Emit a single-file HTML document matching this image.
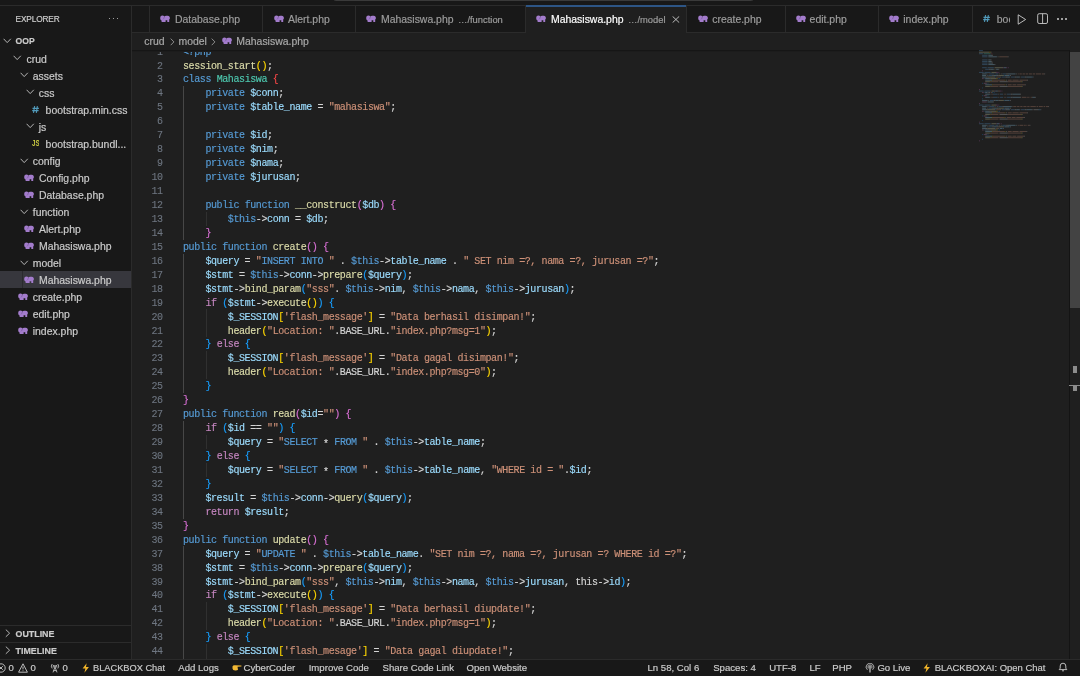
<!DOCTYPE html><html><head><meta charset="utf-8"><style>

html,body{margin:0;padding:0;}
body{width:1080px;height:676px;overflow:hidden;background:#181818;position:relative;font-family:"Liberation Sans", sans-serif;}
.abs{position:absolute;}
.t{position:absolute;white-space:pre;line-height:17px;-webkit-text-stroke:0.18px currentColor;}
.sb{font-size:10.45px;color:#cccccc;}
.tab{font-size:10.45px;color:#9d9d9d;}
.st{font-size:9.6px;color:#cccccc;}
.code{position:absolute;left:0;white-space:pre;font-family:"Liberation Mono", monospace;font-size:10px;letter-spacing:-0.4px;line-height:14px;height:14px;-webkit-text-stroke:0.15px currentColor;}
.ln{position:absolute;text-align:right;width:40px;font-family:"Liberation Mono", monospace;font-size:10px;letter-spacing:-0.4px;line-height:14px;color:#6e7681;-webkit-text-stroke:0.1px currentColor;}

</style></head><body><div id="root" style="position:absolute;left:0;top:0;width:1080px;height:676px;will-change:transform">
<div class="abs" style="left:0;top:0;width:1080px;height:5px;background:#181818"></div>
<div class="abs" style="left:333px;top:-6px;width:421px;height:7.1px;background:#3a3a3a;border-radius:4px"></div>
<div class="abs" style="left:0;top:5px;width:1080px;height:1px;background:#2b2b2b"></div>
<div class="abs" style="left:0;top:6px;width:131px;height:653px;background:#181818"></div>
<div class="abs" style="left:131px;top:6px;width:1px;height:653px;background:#2b2b2b"></div>
<div class="t" style="left:15.6px;top:11px;font-size:8.3px;letter-spacing:-0.15px;color:#cccccc">EXPLORER</div>
<div class="abs" style="left:108.6px;top:18px;width:1.4px;height:1.4px;background:#cccccc;border-radius:1px"></div>
<div class="abs" style="left:112.6px;top:18px;width:1.4px;height:1.4px;background:#cccccc;border-radius:1px"></div>
<div class="abs" style="left:116.6px;top:18px;width:1.4px;height:1.4px;background:#cccccc;border-radius:1px"></div>
<svg style="position:absolute;left:3.3px;top:38.2px" width="9" height="6" viewBox="0 0 9 6"><path d="M0.6 0.8 L4.2 4.6 L7.8 0.8" fill="none" stroke="#c5c5c5" stroke-width="0.9"/></svg>
<div class="t" style="left:15.6px;top:33.0px;font-size:8.6px;font-weight:700;color:#cccccc">OOP</div>
<svg style="position:absolute;left:13.3px;top:55.25000000000001px" width="9" height="6" viewBox="0 0 9 6"><path d="M0.6 0.8 L4.2 4.6 L7.8 0.8" fill="none" stroke="#c5c5c5" stroke-width="0.9"/></svg>
<div class="t sb" style="left:26.6px;top:50.550000000000004px">crud</div>
<svg style="position:absolute;left:19.6px;top:72.3px" width="9" height="6" viewBox="0 0 9 6"><path d="M0.6 0.8 L4.2 4.6 L7.8 0.8" fill="none" stroke="#c5c5c5" stroke-width="0.9"/></svg>
<div class="t sb" style="left:32.75px;top:67.60000000000001px">assets</div>
<svg style="position:absolute;left:25.8px;top:89.35px" width="9" height="6" viewBox="0 0 9 6"><path d="M0.6 0.8 L4.2 4.6 L7.8 0.8" fill="none" stroke="#c5c5c5" stroke-width="0.9"/></svg>
<div class="t sb" style="left:38.75px;top:84.65px">css</div>
<svg style="position:absolute;left:31.9px;top:105.70000000000002px" width="7.2" height="7" viewBox="0 0 7.2 7"><path d="M2.6 0.2 L1.5 6.8 M5.4 0.2 L4.3 6.8 M0.5 2.3 H6.9 M0.2 4.7 H6.6" stroke="#519aba" stroke-width="1.15"/></svg>
<div class="t sb" style="left:45.6px;top:101.70000000000002px">bootstrap.min.css</div>
<svg style="position:absolute;left:25.8px;top:123.44999999999999px" width="9" height="6" viewBox="0 0 9 6"><path d="M0.6 0.8 L4.2 4.6 L7.8 0.8" fill="none" stroke="#c5c5c5" stroke-width="0.9"/></svg>
<div class="t sb" style="left:38.75px;top:118.75px">js</div>
<svg style="position:absolute;left:31.9px;top:139.9px" width="7.6" height="6.5" viewBox="0 0 7.6 6.5"><text x="0" y="6.2" font-family="Liberation Sans" font-weight="700" font-size="8.4" fill="#cbcb41" textLength="7.6" lengthAdjust="spacingAndGlyphs">JS</text></svg>
<div class="t sb" style="left:45.6px;top:135.8px">bootstrap.bundl...</div>
<svg style="position:absolute;left:19.6px;top:157.55px" width="9" height="6" viewBox="0 0 9 6"><path d="M0.6 0.8 L4.2 4.6 L7.8 0.8" fill="none" stroke="#c5c5c5" stroke-width="0.9"/></svg>
<div class="t sb" style="left:32.75px;top:152.85000000000002px">config</div>
<svg style="position:absolute;left:24.4px;top:174.0px" width="10" height="7.1" viewBox="0 0 10 7.1"><path fill="#a37ccc" d="M0.2 3.0 C0.2 1.2 1.2 0.4 2.4 0.4 C3.3 0.4 3.8 0.7 4.2 1.2 L4.5 1.5 C4.8 1.0 5.3 0.7 6.2 0.7 L7.8 0.7 C9.2 0.7 9.9 1.8 9.9 3.0 C9.9 3.8 9.6 4.3 9.2 4.6 L9.2 7.1 L7.3 7.1 L7.3 5.3 L5.6 5.3 L5.6 7.1 L1.6 7.1 L1.6 5.6 C0.8 5.2 0.2 4.4 0.2 3.0 Z"/><path d="M4.5 1.5 C4.2 2.5 4.1 3.4 3.1 4.3" fill="none" stroke="#4a3366" stroke-width="0.6" opacity="0.6"/></svg>
<div class="t sb" style="left:39.0px;top:169.9px">Config.php</div>
<svg style="position:absolute;left:24.4px;top:191.05px" width="10" height="7.1" viewBox="0 0 10 7.1"><path fill="#a37ccc" d="M0.2 3.0 C0.2 1.2 1.2 0.4 2.4 0.4 C3.3 0.4 3.8 0.7 4.2 1.2 L4.5 1.5 C4.8 1.0 5.3 0.7 6.2 0.7 L7.8 0.7 C9.2 0.7 9.9 1.8 9.9 3.0 C9.9 3.8 9.6 4.3 9.2 4.6 L9.2 7.1 L7.3 7.1 L7.3 5.3 L5.6 5.3 L5.6 7.1 L1.6 7.1 L1.6 5.6 C0.8 5.2 0.2 4.4 0.2 3.0 Z"/><path d="M4.5 1.5 C4.2 2.5 4.1 3.4 3.1 4.3" fill="none" stroke="#4a3366" stroke-width="0.6" opacity="0.6"/></svg>
<div class="t sb" style="left:39.0px;top:186.95000000000002px">Database.php</div>
<svg style="position:absolute;left:19.6px;top:208.7px" width="9" height="6" viewBox="0 0 9 6"><path d="M0.6 0.8 L4.2 4.6 L7.8 0.8" fill="none" stroke="#c5c5c5" stroke-width="0.9"/></svg>
<div class="t sb" style="left:32.75px;top:204.0px">function</div>
<svg style="position:absolute;left:24.4px;top:225.15px" width="10" height="7.1" viewBox="0 0 10 7.1"><path fill="#a37ccc" d="M0.2 3.0 C0.2 1.2 1.2 0.4 2.4 0.4 C3.3 0.4 3.8 0.7 4.2 1.2 L4.5 1.5 C4.8 1.0 5.3 0.7 6.2 0.7 L7.8 0.7 C9.2 0.7 9.9 1.8 9.9 3.0 C9.9 3.8 9.6 4.3 9.2 4.6 L9.2 7.1 L7.3 7.1 L7.3 5.3 L5.6 5.3 L5.6 7.1 L1.6 7.1 L1.6 5.6 C0.8 5.2 0.2 4.4 0.2 3.0 Z"/><path d="M4.5 1.5 C4.2 2.5 4.1 3.4 3.1 4.3" fill="none" stroke="#4a3366" stroke-width="0.6" opacity="0.6"/></svg>
<div class="t sb" style="left:39.0px;top:221.05px">Alert.php</div>
<svg style="position:absolute;left:24.4px;top:242.20000000000002px" width="10" height="7.1" viewBox="0 0 10 7.1"><path fill="#a37ccc" d="M0.2 3.0 C0.2 1.2 1.2 0.4 2.4 0.4 C3.3 0.4 3.8 0.7 4.2 1.2 L4.5 1.5 C4.8 1.0 5.3 0.7 6.2 0.7 L7.8 0.7 C9.2 0.7 9.9 1.8 9.9 3.0 C9.9 3.8 9.6 4.3 9.2 4.6 L9.2 7.1 L7.3 7.1 L7.3 5.3 L5.6 5.3 L5.6 7.1 L1.6 7.1 L1.6 5.6 C0.8 5.2 0.2 4.4 0.2 3.0 Z"/><path d="M4.5 1.5 C4.2 2.5 4.1 3.4 3.1 4.3" fill="none" stroke="#4a3366" stroke-width="0.6" opacity="0.6"/></svg>
<div class="t sb" style="left:39.0px;top:238.10000000000002px">Mahasiswa.php</div>
<svg style="position:absolute;left:19.6px;top:259.85px" width="9" height="6" viewBox="0 0 9 6"><path d="M0.6 0.8 L4.2 4.6 L7.8 0.8" fill="none" stroke="#c5c5c5" stroke-width="0.9"/></svg>
<div class="t sb" style="left:32.75px;top:255.15px">model</div>
<div class="abs" style="left:0;top:271.3px;width:131px;height:17px;background:#37373d"></div>
<div class="abs" style="left:21.5px;top:271.3px;width:1px;height:17px;background:#2a2a2e"></div>
<svg style="position:absolute;left:24.4px;top:276.3px" width="10" height="7.1" viewBox="0 0 10 7.1"><path fill="#a37ccc" d="M0.2 3.0 C0.2 1.2 1.2 0.4 2.4 0.4 C3.3 0.4 3.8 0.7 4.2 1.2 L4.5 1.5 C4.8 1.0 5.3 0.7 6.2 0.7 L7.8 0.7 C9.2 0.7 9.9 1.8 9.9 3.0 C9.9 3.8 9.6 4.3 9.2 4.6 L9.2 7.1 L7.3 7.1 L7.3 5.3 L5.6 5.3 L5.6 7.1 L1.6 7.1 L1.6 5.6 C0.8 5.2 0.2 4.4 0.2 3.0 Z"/><path d="M4.5 1.5 C4.2 2.5 4.1 3.4 3.1 4.3" fill="none" stroke="#4a3366" stroke-width="0.6" opacity="0.6"/></svg>
<div class="t sb" style="left:39.0px;top:272.2px">Mahasiswa.php</div>
<svg style="position:absolute;left:18.1px;top:293.35px" width="10" height="7.1" viewBox="0 0 10 7.1"><path fill="#a37ccc" d="M0.2 3.0 C0.2 1.2 1.2 0.4 2.4 0.4 C3.3 0.4 3.8 0.7 4.2 1.2 L4.5 1.5 C4.8 1.0 5.3 0.7 6.2 0.7 L7.8 0.7 C9.2 0.7 9.9 1.8 9.9 3.0 C9.9 3.8 9.6 4.3 9.2 4.6 L9.2 7.1 L7.3 7.1 L7.3 5.3 L5.6 5.3 L5.6 7.1 L1.6 7.1 L1.6 5.6 C0.8 5.2 0.2 4.4 0.2 3.0 Z"/><path d="M4.5 1.5 C4.2 2.5 4.1 3.4 3.1 4.3" fill="none" stroke="#4a3366" stroke-width="0.6" opacity="0.6"/></svg>
<div class="t sb" style="left:32.75px;top:289.25px">create.php</div>
<svg style="position:absolute;left:18.1px;top:310.40000000000003px" width="10" height="7.1" viewBox="0 0 10 7.1"><path fill="#a37ccc" d="M0.2 3.0 C0.2 1.2 1.2 0.4 2.4 0.4 C3.3 0.4 3.8 0.7 4.2 1.2 L4.5 1.5 C4.8 1.0 5.3 0.7 6.2 0.7 L7.8 0.7 C9.2 0.7 9.9 1.8 9.9 3.0 C9.9 3.8 9.6 4.3 9.2 4.6 L9.2 7.1 L7.3 7.1 L7.3 5.3 L5.6 5.3 L5.6 7.1 L1.6 7.1 L1.6 5.6 C0.8 5.2 0.2 4.4 0.2 3.0 Z"/><path d="M4.5 1.5 C4.2 2.5 4.1 3.4 3.1 4.3" fill="none" stroke="#4a3366" stroke-width="0.6" opacity="0.6"/></svg>
<div class="t sb" style="left:32.75px;top:306.3px">edit.php</div>
<svg style="position:absolute;left:18.1px;top:327.45000000000005px" width="10" height="7.1" viewBox="0 0 10 7.1"><path fill="#a37ccc" d="M0.2 3.0 C0.2 1.2 1.2 0.4 2.4 0.4 C3.3 0.4 3.8 0.7 4.2 1.2 L4.5 1.5 C4.8 1.0 5.3 0.7 6.2 0.7 L7.8 0.7 C9.2 0.7 9.9 1.8 9.9 3.0 C9.9 3.8 9.6 4.3 9.2 4.6 L9.2 7.1 L7.3 7.1 L7.3 5.3 L5.6 5.3 L5.6 7.1 L1.6 7.1 L1.6 5.6 C0.8 5.2 0.2 4.4 0.2 3.0 Z"/><path d="M4.5 1.5 C4.2 2.5 4.1 3.4 3.1 4.3" fill="none" stroke="#4a3366" stroke-width="0.6" opacity="0.6"/></svg>
<div class="t sb" style="left:32.75px;top:323.35px">index.php</div>
<div class="abs" style="left:0;top:625px;width:131px;height:1px;background:#2b2b2b"></div>
<div class="abs" style="left:0;top:642px;width:131px;height:1px;background:#2b2b2b"></div>
<svg style="position:absolute;left:5.2px;top:629.4px" width="6" height="9" viewBox="0 0 6 9"><path d="M0.8 0.6 L4.6 4.2 L0.8 7.8" fill="none" stroke="#c5c5c5" stroke-width="0.9"/></svg>
<div class="t" style="left:15.6px;top:625.5px;font-size:8.85px;font-weight:700;color:#cccccc">OUTLINE</div>
<svg style="position:absolute;left:5.2px;top:646.4px" width="6" height="9" viewBox="0 0 6 9"><path d="M0.8 0.6 L4.6 4.2 L0.8 7.8" fill="none" stroke="#c5c5c5" stroke-width="0.9"/></svg>
<div class="t" style="left:15.6px;top:642.5px;font-size:8.85px;font-weight:700;color:#cccccc">TIMELINE</div>
<div class="abs" style="left:132px;top:6px;width:948px;height:26px;background:#181818"></div>
<div class="abs" style="left:132px;top:32px;width:948px;height:1px;background:#2b2b2b"></div>
<div class="abs" style="left:149px;top:6px;width:1px;height:26px;background:#2b2b2b"></div>
<div class="abs" style="left:262px;top:6px;width:1px;height:26px;background:#2b2b2b"></div>
<div class="abs" style="left:355px;top:6px;width:1px;height:26px;background:#2b2b2b"></div>
<div class="abs" style="left:525px;top:6px;width:1px;height:26px;background:#2b2b2b"></div>
<div class="abs" style="left:686px;top:6px;width:1px;height:26px;background:#2b2b2b"></div>
<div class="abs" style="left:785px;top:6px;width:1px;height:26px;background:#2b2b2b"></div>
<div class="abs" style="left:878px;top:6px;width:1px;height:26px;background:#2b2b2b"></div>
<div class="abs" style="left:972px;top:6px;width:1px;height:26px;background:#2b2b2b"></div>
<div class="abs" style="left:526px;top:6px;width:160px;height:27px;background:#1f1f1f"></div>
<div class="abs" style="left:526px;top:5px;width:160px;height:2px;background:#2d5585"></div>
<svg style="position:absolute;left:160.3px;top:15px" width="10" height="7.1" viewBox="0 0 10 7.1"><path fill="#a37ccc" d="M0.2 3.0 C0.2 1.2 1.2 0.4 2.4 0.4 C3.3 0.4 3.8 0.7 4.2 1.2 L4.5 1.5 C4.8 1.0 5.3 0.7 6.2 0.7 L7.8 0.7 C9.2 0.7 9.9 1.8 9.9 3.0 C9.9 3.8 9.6 4.3 9.2 4.6 L9.2 7.1 L7.3 7.1 L7.3 5.3 L5.6 5.3 L5.6 7.1 L1.6 7.1 L1.6 5.6 C0.8 5.2 0.2 4.4 0.2 3.0 Z"/><path d="M4.5 1.5 C4.2 2.5 4.1 3.4 3.1 4.3" fill="none" stroke="#4a3366" stroke-width="0.6" opacity="0.6"/></svg>
<div class="t tab" style="left:175px;top:10.5px;color:#9d9d9d">Database.php</div>
<svg style="position:absolute;left:273.5px;top:15px" width="10" height="7.1" viewBox="0 0 10 7.1"><path fill="#a37ccc" d="M0.2 3.0 C0.2 1.2 1.2 0.4 2.4 0.4 C3.3 0.4 3.8 0.7 4.2 1.2 L4.5 1.5 C4.8 1.0 5.3 0.7 6.2 0.7 L7.8 0.7 C9.2 0.7 9.9 1.8 9.9 3.0 C9.9 3.8 9.6 4.3 9.2 4.6 L9.2 7.1 L7.3 7.1 L7.3 5.3 L5.6 5.3 L5.6 7.1 L1.6 7.1 L1.6 5.6 C0.8 5.2 0.2 4.4 0.2 3.0 Z"/><path d="M4.5 1.5 C4.2 2.5 4.1 3.4 3.1 4.3" fill="none" stroke="#4a3366" stroke-width="0.6" opacity="0.6"/></svg>
<div class="t tab" style="left:288px;top:10.5px;color:#9d9d9d">Alert.php</div>
<svg style="position:absolute;left:366px;top:15px" width="10" height="7.1" viewBox="0 0 10 7.1"><path fill="#a37ccc" d="M0.2 3.0 C0.2 1.2 1.2 0.4 2.4 0.4 C3.3 0.4 3.8 0.7 4.2 1.2 L4.5 1.5 C4.8 1.0 5.3 0.7 6.2 0.7 L7.8 0.7 C9.2 0.7 9.9 1.8 9.9 3.0 C9.9 3.8 9.6 4.3 9.2 4.6 L9.2 7.1 L7.3 7.1 L7.3 5.3 L5.6 5.3 L5.6 7.1 L1.6 7.1 L1.6 5.6 C0.8 5.2 0.2 4.4 0.2 3.0 Z"/><path d="M4.5 1.5 C4.2 2.5 4.1 3.4 3.1 4.3" fill="none" stroke="#4a3366" stroke-width="0.6" opacity="0.6"/></svg>
<div class="t tab" style="left:381px;top:10.5px;color:#9d9d9d">Mahasiswa.php</div>
<div class="t" style="left:458px;top:11px;font-size:9.4px;color:#9d9d9d">…/function</div>
<svg style="position:absolute;left:536.4px;top:15px" width="10" height="7.1" viewBox="0 0 10 7.1"><path fill="#a37ccc" d="M0.2 3.0 C0.2 1.2 1.2 0.4 2.4 0.4 C3.3 0.4 3.8 0.7 4.2 1.2 L4.5 1.5 C4.8 1.0 5.3 0.7 6.2 0.7 L7.8 0.7 C9.2 0.7 9.9 1.8 9.9 3.0 C9.9 3.8 9.6 4.3 9.2 4.6 L9.2 7.1 L7.3 7.1 L7.3 5.3 L5.6 5.3 L5.6 7.1 L1.6 7.1 L1.6 5.6 C0.8 5.2 0.2 4.4 0.2 3.0 Z"/><path d="M4.5 1.5 C4.2 2.5 4.1 3.4 3.1 4.3" fill="none" stroke="#4a3366" stroke-width="0.6" opacity="0.6"/></svg>
<div class="t tab" style="left:551px;top:10.5px;color:#ffffff">Mahasiswa.php</div>
<div class="t" style="left:628px;top:11px;font-size:9.4px;color:#9d9d9d">…/model</div>
<svg style="position:absolute;left:697.8px;top:15px" width="10" height="7.1" viewBox="0 0 10 7.1"><path fill="#a37ccc" d="M0.2 3.0 C0.2 1.2 1.2 0.4 2.4 0.4 C3.3 0.4 3.8 0.7 4.2 1.2 L4.5 1.5 C4.8 1.0 5.3 0.7 6.2 0.7 L7.8 0.7 C9.2 0.7 9.9 1.8 9.9 3.0 C9.9 3.8 9.6 4.3 9.2 4.6 L9.2 7.1 L7.3 7.1 L7.3 5.3 L5.6 5.3 L5.6 7.1 L1.6 7.1 L1.6 5.6 C0.8 5.2 0.2 4.4 0.2 3.0 Z"/><path d="M4.5 1.5 C4.2 2.5 4.1 3.4 3.1 4.3" fill="none" stroke="#4a3366" stroke-width="0.6" opacity="0.6"/></svg>
<div class="t tab" style="left:712.2px;top:10.5px;color:#9d9d9d">create.php</div>
<svg style="position:absolute;left:795.5px;top:15px" width="10" height="7.1" viewBox="0 0 10 7.1"><path fill="#a37ccc" d="M0.2 3.0 C0.2 1.2 1.2 0.4 2.4 0.4 C3.3 0.4 3.8 0.7 4.2 1.2 L4.5 1.5 C4.8 1.0 5.3 0.7 6.2 0.7 L7.8 0.7 C9.2 0.7 9.9 1.8 9.9 3.0 C9.9 3.8 9.6 4.3 9.2 4.6 L9.2 7.1 L7.3 7.1 L7.3 5.3 L5.6 5.3 L5.6 7.1 L1.6 7.1 L1.6 5.6 C0.8 5.2 0.2 4.4 0.2 3.0 Z"/><path d="M4.5 1.5 C4.2 2.5 4.1 3.4 3.1 4.3" fill="none" stroke="#4a3366" stroke-width="0.6" opacity="0.6"/></svg>
<div class="t tab" style="left:809.6px;top:10.5px;color:#9d9d9d">edit.php</div>
<svg style="position:absolute;left:888.5px;top:15px" width="10" height="7.1" viewBox="0 0 10 7.1"><path fill="#a37ccc" d="M0.2 3.0 C0.2 1.2 1.2 0.4 2.4 0.4 C3.3 0.4 3.8 0.7 4.2 1.2 L4.5 1.5 C4.8 1.0 5.3 0.7 6.2 0.7 L7.8 0.7 C9.2 0.7 9.9 1.8 9.9 3.0 C9.9 3.8 9.6 4.3 9.2 4.6 L9.2 7.1 L7.3 7.1 L7.3 5.3 L5.6 5.3 L5.6 7.1 L1.6 7.1 L1.6 5.6 C0.8 5.2 0.2 4.4 0.2 3.0 Z"/><path d="M4.5 1.5 C4.2 2.5 4.1 3.4 3.1 4.3" fill="none" stroke="#4a3366" stroke-width="0.6" opacity="0.6"/></svg>
<div class="t tab" style="left:903.3px;top:10.5px;color:#9d9d9d">index.php</div>
<svg class="abs" style="left:671.5px;top:15.8px" width="8" height="7" viewBox="0 0 8 7"><path d="M0.6 0.4 L7.2 6.6 M7.2 0.4 L0.6 6.6" stroke="#cccccc" stroke-width="0.9"/></svg>
<svg class="abs" style="left:983.4px;top:15.2px" width="7.2" height="7" viewBox="0 0 7.2 7"><path d="M2.6 0.2 L1.5 6.8 M5.4 0.2 L4.3 6.8 M0.5 2.3 H6.9 M0.2 4.7 H6.6" stroke="#519aba" stroke-width="1.15"/></svg>
<div class="abs" style="left:996px;top:6px;width:14px;height:26px;overflow:hidden"><div class="t tab" style="left:0.8px;top:4.5px">bootstrap</div></div>
<svg class="abs" style="left:1017px;top:13.5px" width="10" height="11" viewBox="0 0 10 11"><path d="M1.2 0.8 L8.6 5.5 L1.2 10.2 Z" fill="none" stroke="#cccccc" stroke-width="0.9" stroke-linejoin="round"/></svg>
<svg class="abs" style="left:1036.5px;top:13px" width="12" height="11" viewBox="0 0 12 11"><rect x="0.7" y="0.7" width="9.8" height="9.8" rx="1.5" fill="none" stroke="#cccccc" stroke-width="0.9"/><path d="M5.6 0.7 V10.5" stroke="#cccccc" stroke-width="0.9"/></svg>
<div class="abs" style="left:1057.2px;top:18.3px;width:1.5px;height:1.5px;background:#cccccc;border-radius:1px"></div>
<div class="abs" style="left:1061.2px;top:18.3px;width:1.5px;height:1.5px;background:#cccccc;border-radius:1px"></div>
<div class="abs" style="left:1065.2px;top:18.3px;width:1.5px;height:1.5px;background:#cccccc;border-radius:1px"></div>
<div class="abs" style="left:132px;top:33px;width:948px;height:17px;background:#1f1f1f"></div>
<div class="t tab" style="left:144.3px;top:33.3px;color:#a9a9a9">crud</div>
<svg class="abs" style="left:170.3px;top:38.3px" width="5" height="8" viewBox="0 0 5 8"><path d="M0.7 0.6 L3.9 3.9 L0.7 7.2" fill="none" stroke="#a9a9a9" stroke-width="0.8"/></svg>
<div class="t tab" style="left:178.5px;top:33.3px;color:#a9a9a9">model</div>
<svg class="abs" style="left:211.3px;top:38.3px" width="5" height="8" viewBox="0 0 5 8"><path d="M0.7 0.6 L3.9 3.9 L0.7 7.2" fill="none" stroke="#a9a9a9" stroke-width="0.8"/></svg>
<svg style="position:absolute;left:222px;top:37.1px" width="10" height="7.1" viewBox="0 0 10 7.1"><path fill="#a37ccc" d="M0.2 3.0 C0.2 1.2 1.2 0.4 2.4 0.4 C3.3 0.4 3.8 0.7 4.2 1.2 L4.5 1.5 C4.8 1.0 5.3 0.7 6.2 0.7 L7.8 0.7 C9.2 0.7 9.9 1.8 9.9 3.0 C9.9 3.8 9.6 4.3 9.2 4.6 L9.2 7.1 L7.3 7.1 L7.3 5.3 L5.6 5.3 L5.6 7.1 L1.6 7.1 L1.6 5.6 C0.8 5.2 0.2 4.4 0.2 3.0 Z"/><path d="M4.5 1.5 C4.2 2.5 4.1 3.4 3.1 4.3" fill="none" stroke="#4a3366" stroke-width="0.6" opacity="0.6"/></svg>
<div class="t tab" style="left:236.3px;top:33.3px;color:#a9a9a9">Mahasiswa.php</div>
<div class="abs" style="left:132px;top:50px;width:948px;height:609px;background:#1f1f1f;overflow:hidden">
<div class="abs" style="left:51.00px;top:36.23px;width:1px;height:14px;background:#474747"></div>
<div class="abs" style="left:51.00px;top:50.18px;width:1px;height:14px;background:#474747"></div>
<div class="abs" style="left:51.00px;top:64.12px;width:1px;height:14px;background:#474747"></div>
<div class="abs" style="left:51.00px;top:78.07px;width:1px;height:14px;background:#474747"></div>
<div class="abs" style="left:51.00px;top:92.02px;width:1px;height:14px;background:#474747"></div>
<div class="abs" style="left:51.00px;top:105.96px;width:1px;height:14px;background:#474747"></div>
<div class="abs" style="left:51.00px;top:119.90px;width:1px;height:14px;background:#474747"></div>
<div class="abs" style="left:51.00px;top:133.85px;width:1px;height:14px;background:#474747"></div>
<div class="abs" style="left:51.00px;top:147.80px;width:1px;height:14px;background:#474747"></div>
<div class="abs" style="left:51.00px;top:161.74px;width:1px;height:14px;background:#474747"></div>
<div class="abs" style="left:73.70px;top:161.74px;width:1px;height:14px;background:#303030"></div>
<div class="abs" style="left:51.00px;top:175.69px;width:1px;height:14px;background:#474747"></div>
<div class="abs" style="left:51.00px;top:203.58px;width:1px;height:14px;background:#474747"></div>
<div class="abs" style="left:51.00px;top:217.52px;width:1px;height:14px;background:#474747"></div>
<div class="abs" style="left:51.00px;top:231.47px;width:1px;height:14px;background:#474747"></div>
<div class="abs" style="left:51.00px;top:245.41px;width:1px;height:14px;background:#474747"></div>
<div class="abs" style="left:51.00px;top:259.36px;width:1px;height:14px;background:#474747"></div>
<div class="abs" style="left:73.70px;top:259.36px;width:1px;height:14px;background:#303030"></div>
<div class="abs" style="left:51.00px;top:273.30px;width:1px;height:14px;background:#474747"></div>
<div class="abs" style="left:73.70px;top:273.30px;width:1px;height:14px;background:#303030"></div>
<div class="abs" style="left:51.00px;top:287.25px;width:1px;height:14px;background:#474747"></div>
<div class="abs" style="left:51.00px;top:301.19px;width:1px;height:14px;background:#474747"></div>
<div class="abs" style="left:73.70px;top:301.19px;width:1px;height:14px;background:#303030"></div>
<div class="abs" style="left:51.00px;top:315.14px;width:1px;height:14px;background:#474747"></div>
<div class="abs" style="left:73.70px;top:315.14px;width:1px;height:14px;background:#303030"></div>
<div class="abs" style="left:51.00px;top:329.08px;width:1px;height:14px;background:#474747"></div>
<div class="abs" style="left:51.00px;top:370.92px;width:1px;height:14px;background:#474747"></div>
<div class="abs" style="left:51.00px;top:384.86px;width:1px;height:14px;background:#474747"></div>
<div class="abs" style="left:73.70px;top:384.86px;width:1px;height:14px;background:#303030"></div>
<div class="abs" style="left:51.00px;top:398.81px;width:1px;height:14px;background:#474747"></div>
<div class="abs" style="left:51.00px;top:412.75px;width:1px;height:14px;background:#474747"></div>
<div class="abs" style="left:73.70px;top:412.75px;width:1px;height:14px;background:#303030"></div>
<div class="abs" style="left:51.00px;top:426.70px;width:1px;height:14px;background:#474747"></div>
<div class="abs" style="left:51.00px;top:440.64px;width:1px;height:14px;background:#474747"></div>
<div class="abs" style="left:51.00px;top:454.59px;width:1px;height:14px;background:#474747"></div>
<div class="abs" style="left:51.00px;top:496.42px;width:1px;height:14px;background:#474747"></div>
<div class="abs" style="left:51.00px;top:510.37px;width:1px;height:14px;background:#474747"></div>
<div class="abs" style="left:51.00px;top:524.31px;width:1px;height:14px;background:#474747"></div>
<div class="abs" style="left:51.00px;top:538.25px;width:1px;height:14px;background:#474747"></div>
<div class="abs" style="left:51.00px;top:552.20px;width:1px;height:14px;background:#474747"></div>
<div class="abs" style="left:73.70px;top:552.20px;width:1px;height:14px;background:#303030"></div>
<div class="abs" style="left:51.00px;top:566.14px;width:1px;height:14px;background:#474747"></div>
<div class="abs" style="left:73.70px;top:566.14px;width:1px;height:14px;background:#303030"></div>
<div class="abs" style="left:51.00px;top:580.09px;width:1px;height:14px;background:#474747"></div>
<div class="abs" style="left:51.00px;top:594.03px;width:1px;height:14px;background:#474747"></div>
<div class="abs" style="left:73.70px;top:594.03px;width:1px;height:14px;background:#303030"></div>
<div class="abs" style="left:51.00px;top:607.98px;width:1px;height:14px;background:#474747"></div>
<div class="abs" style="left:73.70px;top:607.98px;width:1px;height:14px;background:#303030"></div>
<div class="ln" style="left:-9.30px;top:-4.40px">1</div>
<div class="code" style="left:51.0px;top:-4.40px"><span style="color:#569cd6">&lt;?php</span></div>
<div class="ln" style="left:-9.30px;top:9.55px">2</div>
<div class="code" style="left:51.0px;top:9.55px"><span style="color:#dcdcaa">session_start</span><span style="color:#ffd700">()</span><span style="color:#d4d4d4">;</span></div>
<div class="ln" style="left:-9.30px;top:23.49px">3</div>
<div class="code" style="left:51.0px;top:23.49px"><span style="color:#569cd6">class</span><span style="color:#d4d4d4"> </span><span style="color:#4ec9b0">Mahasiswa</span><span style="color:#d4d4d4"> </span><span style="color:#f44747">{</span></div>
<div class="ln" style="left:-9.30px;top:37.44px">4</div>
<div class="code" style="left:51.0px;top:37.44px"><span style="color:#d4d4d4">    </span><span style="color:#569cd6">private</span><span style="color:#d4d4d4"> </span><span style="color:#9cdcfe">$conn</span><span style="color:#d4d4d4">;</span></div>
<div class="ln" style="left:-9.30px;top:51.38px">5</div>
<div class="code" style="left:51.0px;top:51.38px"><span style="color:#d4d4d4">    </span><span style="color:#569cd6">private</span><span style="color:#d4d4d4"> </span><span style="color:#9cdcfe">$table_name</span><span style="color:#d4d4d4"> = </span><span style="color:#ce9178">&quot;mahasiswa&quot;</span><span style="color:#d4d4d4">;</span></div>
<div class="ln" style="left:-9.30px;top:65.32px">6</div>
<div class="code" style="left:51.0px;top:65.32px"></div>
<div class="ln" style="left:-9.30px;top:79.27px">7</div>
<div class="code" style="left:51.0px;top:79.27px"><span style="color:#d4d4d4">    </span><span style="color:#569cd6">private</span><span style="color:#d4d4d4"> </span><span style="color:#9cdcfe">$id</span><span style="color:#d4d4d4">;</span></div>
<div class="ln" style="left:-9.30px;top:93.22px">8</div>
<div class="code" style="left:51.0px;top:93.22px"><span style="color:#d4d4d4">    </span><span style="color:#569cd6">private</span><span style="color:#d4d4d4"> </span><span style="color:#9cdcfe">$nim</span><span style="color:#d4d4d4">;</span></div>
<div class="ln" style="left:-9.30px;top:107.16px">9</div>
<div class="code" style="left:51.0px;top:107.16px"><span style="color:#d4d4d4">    </span><span style="color:#569cd6">private</span><span style="color:#d4d4d4"> </span><span style="color:#9cdcfe">$nama</span><span style="color:#d4d4d4">;</span></div>
<div class="ln" style="left:-9.30px;top:121.10px">10</div>
<div class="code" style="left:51.0px;top:121.10px"><span style="color:#d4d4d4">    </span><span style="color:#569cd6">private</span><span style="color:#d4d4d4"> </span><span style="color:#9cdcfe">$jurusan</span><span style="color:#d4d4d4">;</span></div>
<div class="ln" style="left:-9.30px;top:135.05px">11</div>
<div class="code" style="left:51.0px;top:135.05px"></div>
<div class="ln" style="left:-9.30px;top:149.00px">12</div>
<div class="code" style="left:51.0px;top:149.00px"><span style="color:#d4d4d4">    </span><span style="color:#569cd6">public</span><span style="color:#d4d4d4"> </span><span style="color:#569cd6">function</span><span style="color:#d4d4d4"> </span><span style="color:#dcdcaa">__construct</span><span style="color:#da70d6">(</span><span style="color:#9cdcfe">$db</span><span style="color:#da70d6">)</span><span style="color:#d4d4d4"> </span><span style="color:#da70d6">{</span></div>
<div class="ln" style="left:-9.30px;top:162.94px">13</div>
<div class="code" style="left:51.0px;top:162.94px"><span style="color:#d4d4d4">        </span><span style="color:#569cd6">$this</span><span style="color:#d4d4d4">-&gt;</span><span style="color:#9cdcfe">conn</span><span style="color:#d4d4d4"> = </span><span style="color:#9cdcfe">$db</span><span style="color:#d4d4d4">;</span></div>
<div class="ln" style="left:-9.30px;top:176.88px">14</div>
<div class="code" style="left:51.0px;top:176.88px"><span style="color:#d4d4d4">    </span><span style="color:#da70d6">}</span></div>
<div class="ln" style="left:-9.30px;top:190.83px">15</div>
<div class="code" style="left:51.0px;top:190.83px"><span style="color:#569cd6">public</span><span style="color:#d4d4d4"> </span><span style="color:#569cd6">function</span><span style="color:#d4d4d4"> </span><span style="color:#dcdcaa">create</span><span style="color:#da70d6">()</span><span style="color:#d4d4d4"> </span><span style="color:#da70d6">{</span></div>
<div class="ln" style="left:-9.30px;top:204.78px">16</div>
<div class="code" style="left:51.0px;top:204.78px"><span style="color:#d4d4d4">    </span><span style="color:#9cdcfe">$query</span><span style="color:#d4d4d4"> = </span><span style="color:#ce9178">&quot;</span><span style="color:#569cd6">INSERT</span><span style="color:#ce9178"> </span><span style="color:#569cd6">INTO</span><span style="color:#ce9178"> &quot;</span><span style="color:#d4d4d4"> . </span><span style="color:#569cd6">$this</span><span style="color:#d4d4d4">-&gt;</span><span style="color:#9cdcfe">table_name</span><span style="color:#d4d4d4"> . </span><span style="color:#ce9178">&quot; SET nim =?, nama =?, jurusan =?&quot;</span><span style="color:#d4d4d4">;</span></div>
<div class="ln" style="left:-9.30px;top:218.72px">17</div>
<div class="code" style="left:51.0px;top:218.72px"><span style="color:#d4d4d4">    </span><span style="color:#9cdcfe">$stmt</span><span style="color:#d4d4d4"> = </span><span style="color:#569cd6">$this</span><span style="color:#d4d4d4">-&gt;</span><span style="color:#9cdcfe">conn</span><span style="color:#d4d4d4">-&gt;</span><span style="color:#dcdcaa">prepare</span><span style="color:#179fff">(</span><span style="color:#9cdcfe">$query</span><span style="color:#179fff">)</span><span style="color:#d4d4d4">;</span></div>
<div class="ln" style="left:-9.30px;top:232.66px">18</div>
<div class="code" style="left:51.0px;top:232.66px"><span style="color:#d4d4d4">    </span><span style="color:#9cdcfe">$stmt</span><span style="color:#d4d4d4">-&gt;</span><span style="color:#dcdcaa">bind_param</span><span style="color:#179fff">(</span><span style="color:#ce9178">&quot;sss&quot;</span><span style="color:#d4d4d4">. </span><span style="color:#569cd6">$this</span><span style="color:#d4d4d4">-&gt;</span><span style="color:#9cdcfe">nim</span><span style="color:#d4d4d4">, </span><span style="color:#569cd6">$this</span><span style="color:#d4d4d4">-&gt;</span><span style="color:#9cdcfe">nama</span><span style="color:#d4d4d4">, </span><span style="color:#569cd6">$this</span><span style="color:#d4d4d4">-&gt;</span><span style="color:#9cdcfe">jurusan</span><span style="color:#179fff">)</span><span style="color:#d4d4d4">;</span></div>
<div class="ln" style="left:-9.30px;top:246.61px">19</div>
<div class="code" style="left:51.0px;top:246.61px"><span style="color:#d4d4d4">    </span><span style="color:#c586c0">if</span><span style="color:#d4d4d4"> </span><span style="color:#179fff">(</span><span style="color:#9cdcfe">$stmt</span><span style="color:#d4d4d4">-&gt;</span><span style="color:#dcdcaa">execute</span><span style="color:#ffd700">()</span><span style="color:#179fff">)</span><span style="color:#d4d4d4"> </span><span style="color:#179fff">{</span></div>
<div class="ln" style="left:-9.30px;top:260.56px">20</div>
<div class="code" style="left:51.0px;top:260.56px"><span style="color:#d4d4d4">        </span><span style="color:#9cdcfe">$_SESSION</span><span style="color:#ffd700">[</span><span style="color:#ce9178">&#x27;flash_message&#x27;</span><span style="color:#ffd700">]</span><span style="color:#d4d4d4"> = </span><span style="color:#ce9178">&quot;Data berhasil disimpan!&quot;</span><span style="color:#d4d4d4">;</span></div>
<div class="ln" style="left:-9.30px;top:274.50px">21</div>
<div class="code" style="left:51.0px;top:274.50px"><span style="color:#d4d4d4">        </span><span style="color:#dcdcaa">header</span><span style="color:#ffd700">(</span><span style="color:#ce9178">&quot;Location: &quot;</span><span style="color:#d4d4d4">.BASE_URL.</span><span style="color:#ce9178">&quot;index.php?msg=1&quot;</span><span style="color:#ffd700">)</span><span style="color:#d4d4d4">;</span></div>
<div class="ln" style="left:-9.30px;top:288.45px">22</div>
<div class="code" style="left:51.0px;top:288.45px"><span style="color:#d4d4d4">    </span><span style="color:#179fff">}</span><span style="color:#d4d4d4"> </span><span style="color:#c586c0">else</span><span style="color:#d4d4d4"> </span><span style="color:#179fff">{</span></div>
<div class="ln" style="left:-9.30px;top:302.39px">23</div>
<div class="code" style="left:51.0px;top:302.39px"><span style="color:#d4d4d4">        </span><span style="color:#9cdcfe">$_SESSION</span><span style="color:#ffd700">[</span><span style="color:#ce9178">&#x27;flash_message&#x27;</span><span style="color:#ffd700">]</span><span style="color:#d4d4d4"> = </span><span style="color:#ce9178">&quot;Data gagal disimpan!&quot;</span><span style="color:#d4d4d4">;</span></div>
<div class="ln" style="left:-9.30px;top:316.34px">24</div>
<div class="code" style="left:51.0px;top:316.34px"><span style="color:#d4d4d4">        </span><span style="color:#dcdcaa">header</span><span style="color:#ffd700">(</span><span style="color:#ce9178">&quot;Location: &quot;</span><span style="color:#d4d4d4">.BASE_URL.</span><span style="color:#ce9178">&quot;index.php?msg=0&quot;</span><span style="color:#ffd700">)</span><span style="color:#d4d4d4">;</span></div>
<div class="ln" style="left:-9.30px;top:330.28px">25</div>
<div class="code" style="left:51.0px;top:330.28px"><span style="color:#d4d4d4">    </span><span style="color:#179fff">}</span></div>
<div class="ln" style="left:-9.30px;top:344.23px">26</div>
<div class="code" style="left:51.0px;top:344.23px"><span style="color:#da70d6">}</span></div>
<div class="ln" style="left:-9.30px;top:358.17px">27</div>
<div class="code" style="left:51.0px;top:358.17px"><span style="color:#569cd6">public</span><span style="color:#d4d4d4"> </span><span style="color:#569cd6">function</span><span style="color:#d4d4d4"> </span><span style="color:#dcdcaa">read</span><span style="color:#da70d6">(</span><span style="color:#9cdcfe">$id</span><span style="color:#d4d4d4">=</span><span style="color:#ce9178">&quot;&quot;</span><span style="color:#da70d6">)</span><span style="color:#d4d4d4"> </span><span style="color:#da70d6">{</span></div>
<div class="ln" style="left:-9.30px;top:372.12px">28</div>
<div class="code" style="left:51.0px;top:372.12px"><span style="color:#d4d4d4">    </span><span style="color:#c586c0">if</span><span style="color:#d4d4d4"> </span><span style="color:#179fff">(</span><span style="color:#9cdcfe">$id</span><span style="color:#d4d4d4"> == </span><span style="color:#ce9178">&quot;&quot;</span><span style="color:#179fff">)</span><span style="color:#d4d4d4"> </span><span style="color:#179fff">{</span></div>
<div class="ln" style="left:-9.30px;top:386.06px">29</div>
<div class="code" style="left:51.0px;top:386.06px"><span style="color:#d4d4d4">        </span><span style="color:#9cdcfe">$query</span><span style="color:#d4d4d4"> = </span><span style="color:#ce9178">&quot;</span><span style="color:#569cd6">SELECT</span><span style="color:#ce9178"> </span><span style="color:#d4d4d4;position:relative;top:1.6px">*</span><span style="color:#ce9178"> </span><span style="color:#569cd6">FROM</span><span style="color:#ce9178"> &quot;</span><span style="color:#d4d4d4"> . </span><span style="color:#569cd6">$this</span><span style="color:#d4d4d4">-&gt;</span><span style="color:#9cdcfe">table_name</span><span style="color:#d4d4d4">;</span></div>
<div class="ln" style="left:-9.30px;top:400.01px">30</div>
<div class="code" style="left:51.0px;top:400.01px"><span style="color:#d4d4d4">    </span><span style="color:#179fff">}</span><span style="color:#d4d4d4"> </span><span style="color:#c586c0">else</span><span style="color:#d4d4d4"> </span><span style="color:#179fff">{</span></div>
<div class="ln" style="left:-9.30px;top:413.95px">31</div>
<div class="code" style="left:51.0px;top:413.95px"><span style="color:#d4d4d4">        </span><span style="color:#9cdcfe">$query</span><span style="color:#d4d4d4"> = </span><span style="color:#ce9178">&quot;</span><span style="color:#569cd6">SELECT</span><span style="color:#ce9178"> </span><span style="color:#d4d4d4;position:relative;top:1.6px">*</span><span style="color:#ce9178"> </span><span style="color:#569cd6">FROM</span><span style="color:#ce9178"> &quot;</span><span style="color:#d4d4d4"> . </span><span style="color:#569cd6">$this</span><span style="color:#d4d4d4">-&gt;</span><span style="color:#9cdcfe">table_name</span><span style="color:#d4d4d4">, </span><span style="color:#ce9178">&quot;WHERE id = &quot;</span><span style="color:#d4d4d4">.</span><span style="color:#9cdcfe">$id</span><span style="color:#d4d4d4">;</span></div>
<div class="ln" style="left:-9.30px;top:427.90px">32</div>
<div class="code" style="left:51.0px;top:427.90px"><span style="color:#d4d4d4">    </span><span style="color:#179fff">}</span></div>
<div class="ln" style="left:-9.30px;top:441.84px">33</div>
<div class="code" style="left:51.0px;top:441.84px"><span style="color:#d4d4d4">    </span><span style="color:#9cdcfe">$result</span><span style="color:#d4d4d4"> = </span><span style="color:#569cd6">$this</span><span style="color:#d4d4d4">-&gt;</span><span style="color:#9cdcfe">conn</span><span style="color:#d4d4d4">-&gt;</span><span style="color:#dcdcaa">query</span><span style="color:#179fff">(</span><span style="color:#9cdcfe">$query</span><span style="color:#179fff">)</span><span style="color:#d4d4d4">;</span></div>
<div class="ln" style="left:-9.30px;top:455.79px">34</div>
<div class="code" style="left:51.0px;top:455.79px"><span style="color:#d4d4d4">    </span><span style="color:#c586c0">return</span><span style="color:#d4d4d4"> </span><span style="color:#9cdcfe">$result</span><span style="color:#d4d4d4">;</span></div>
<div class="ln" style="left:-9.30px;top:469.73px">35</div>
<div class="code" style="left:51.0px;top:469.73px"><span style="color:#da70d6">}</span></div>
<div class="ln" style="left:-9.30px;top:483.68px">36</div>
<div class="code" style="left:51.0px;top:483.68px"><span style="color:#569cd6">public</span><span style="color:#d4d4d4"> </span><span style="color:#569cd6">function</span><span style="color:#d4d4d4"> </span><span style="color:#dcdcaa">update</span><span style="color:#da70d6">()</span><span style="color:#d4d4d4"> </span><span style="color:#da70d6">{</span></div>
<div class="ln" style="left:-9.30px;top:497.62px">37</div>
<div class="code" style="left:51.0px;top:497.62px"><span style="color:#d4d4d4">    </span><span style="color:#9cdcfe">$query</span><span style="color:#d4d4d4"> = </span><span style="color:#ce9178">&quot;</span><span style="color:#569cd6">UPDATE</span><span style="color:#ce9178"> &quot;</span><span style="color:#d4d4d4"> . </span><span style="color:#569cd6">$this</span><span style="color:#d4d4d4">-&gt;</span><span style="color:#9cdcfe">table_name</span><span style="color:#d4d4d4">. </span><span style="color:#ce9178">&quot;SET nim =?, nama =?, jurusan =? WHERE id =?&quot;</span><span style="color:#d4d4d4">;</span></div>
<div class="ln" style="left:-9.30px;top:511.57px">38</div>
<div class="code" style="left:51.0px;top:511.57px"><span style="color:#d4d4d4">    </span><span style="color:#9cdcfe">$stmt</span><span style="color:#d4d4d4"> = </span><span style="color:#569cd6">$this</span><span style="color:#d4d4d4">-&gt;</span><span style="color:#9cdcfe">conn</span><span style="color:#d4d4d4">-&gt;</span><span style="color:#dcdcaa">prepare</span><span style="color:#179fff">(</span><span style="color:#9cdcfe">$query</span><span style="color:#179fff">)</span><span style="color:#d4d4d4">;</span></div>
<div class="ln" style="left:-9.30px;top:525.51px">39</div>
<div class="code" style="left:51.0px;top:525.51px"><span style="color:#d4d4d4">    </span><span style="color:#9cdcfe">$stmt</span><span style="color:#d4d4d4">-&gt;</span><span style="color:#dcdcaa">bind_param</span><span style="color:#179fff">(</span><span style="color:#ce9178">&quot;sss&quot;</span><span style="color:#d4d4d4">, </span><span style="color:#569cd6">$this</span><span style="color:#d4d4d4">-&gt;</span><span style="color:#9cdcfe">nim</span><span style="color:#d4d4d4">, </span><span style="color:#569cd6">$this</span><span style="color:#d4d4d4">-&gt;</span><span style="color:#9cdcfe">nama</span><span style="color:#d4d4d4">, </span><span style="color:#569cd6">$this</span><span style="color:#d4d4d4">-&gt;</span><span style="color:#9cdcfe">jurusan</span><span style="color:#d4d4d4">, this-&gt;</span><span style="color:#9cdcfe">id</span><span style="color:#179fff">)</span><span style="color:#d4d4d4">;</span></div>
<div class="ln" style="left:-9.30px;top:539.46px">40</div>
<div class="code" style="left:51.0px;top:539.46px"><span style="color:#d4d4d4">    </span><span style="color:#c586c0">if</span><span style="color:#d4d4d4"> </span><span style="color:#179fff">(</span><span style="color:#9cdcfe">$stmt</span><span style="color:#d4d4d4">-&gt;</span><span style="color:#dcdcaa">execute</span><span style="color:#ffd700">()</span><span style="color:#179fff">)</span><span style="color:#d4d4d4"> </span><span style="color:#179fff">{</span></div>
<div class="ln" style="left:-9.30px;top:553.40px">41</div>
<div class="code" style="left:51.0px;top:553.40px"><span style="color:#d4d4d4">        </span><span style="color:#9cdcfe">$_SESSION</span><span style="color:#ffd700">[</span><span style="color:#ce9178">&#x27;flash_message&#x27;</span><span style="color:#ffd700">]</span><span style="color:#d4d4d4"> = </span><span style="color:#ce9178">&quot;Data berhasil diupdate!&quot;</span><span style="color:#d4d4d4">;</span></div>
<div class="ln" style="left:-9.30px;top:567.35px">42</div>
<div class="code" style="left:51.0px;top:567.35px"><span style="color:#d4d4d4">        </span><span style="color:#dcdcaa">header</span><span style="color:#ffd700">(</span><span style="color:#ce9178">&quot;Location: &quot;</span><span style="color:#d4d4d4">.BASE_URL.</span><span style="color:#ce9178">&quot;index.php?msg=1&quot;</span><span style="color:#ffd700">)</span><span style="color:#d4d4d4">;</span></div>
<div class="ln" style="left:-9.30px;top:581.29px">43</div>
<div class="code" style="left:51.0px;top:581.29px"><span style="color:#d4d4d4">    </span><span style="color:#179fff">}</span><span style="color:#d4d4d4"> </span><span style="color:#c586c0">else</span><span style="color:#d4d4d4"> </span><span style="color:#179fff">{</span></div>
<div class="ln" style="left:-9.30px;top:595.24px">44</div>
<div class="code" style="left:51.0px;top:595.24px"><span style="color:#d4d4d4">        </span><span style="color:#9cdcfe">$_SESSION</span><span style="color:#ffd700">[</span><span style="color:#ce9178">&#x27;flash_mesage&#x27;</span><span style="color:#ffd700">]</span><span style="color:#d4d4d4"> = </span><span style="color:#ce9178">&quot;Data gagal diupdate!&quot;</span><span style="color:#d4d4d4">;</span></div>
<div class="ln" style="left:-9.30px;top:609.18px">45</div>
<div class="code" style="left:51.0px;top:609.18px"><span style="color:#d4d4d4">        </span><span style="color:#dcdcaa">header</span><span style="color:#ffd700">(</span><span style="color:#ce9178">&quot;Location: &quot;</span><span style="color:#d4d4d4">.BASE_URL.</span><span style="color:#ce9178">&quot;index.php?msg=0&quot;</span><span style="color:#ffd700">)</span><span style="color:#d4d4d4">;</span></div>
<div class="abs" style="left:0;top:0;width:937px;height:1px;background:#161616"></div><div class="abs" style="left:0;top:1px;width:937px;height:1px;background:#1c1c1c"></div>
</div>
<svg class="abs" style="left:979.0px;top:49.8px;opacity:0.33" width="90" height="95"><rect x="0.00" y="0.15" width="3.89" height="0.9" fill="#569cd6"/><rect x="0.00" y="1.71" width="10.11" height="0.9" fill="#dcdcaa"/><rect x="10.11" y="1.71" width="1.56" height="0.9" fill="#ffd700"/><rect x="11.67" y="1.71" width="0.78" height="0.9" fill="#d4d4d4"/><rect x="0.00" y="3.26" width="3.89" height="0.9" fill="#569cd6"/><rect x="4.67" y="3.26" width="7.00" height="0.9" fill="#4ec9b0"/><rect x="12.45" y="3.26" width="0.78" height="0.9" fill="#f44747"/><rect x="3.11" y="4.82" width="5.45" height="0.9" fill="#569cd6"/><rect x="9.34" y="4.82" width="3.89" height="0.9" fill="#9cdcfe"/><rect x="13.23" y="4.82" width="0.78" height="0.9" fill="#d4d4d4"/><rect x="3.11" y="6.37" width="5.45" height="0.9" fill="#569cd6"/><rect x="9.34" y="6.37" width="8.56" height="0.9" fill="#9cdcfe"/><rect x="18.67" y="6.37" width="0.78" height="0.9" fill="#d4d4d4"/><rect x="20.23" y="6.37" width="8.56" height="0.9" fill="#ce9178"/><rect x="28.79" y="6.37" width="0.78" height="0.9" fill="#d4d4d4"/><rect x="3.11" y="9.49" width="5.45" height="0.9" fill="#569cd6"/><rect x="9.34" y="9.49" width="2.33" height="0.9" fill="#9cdcfe"/><rect x="11.67" y="9.49" width="0.78" height="0.9" fill="#d4d4d4"/><rect x="3.11" y="11.04" width="5.45" height="0.9" fill="#569cd6"/><rect x="9.34" y="11.04" width="3.11" height="0.9" fill="#9cdcfe"/><rect x="12.45" y="11.04" width="0.78" height="0.9" fill="#d4d4d4"/><rect x="3.11" y="12.60" width="5.45" height="0.9" fill="#569cd6"/><rect x="9.34" y="12.60" width="3.89" height="0.9" fill="#9cdcfe"/><rect x="13.23" y="12.60" width="0.78" height="0.9" fill="#d4d4d4"/><rect x="3.11" y="14.15" width="5.45" height="0.9" fill="#569cd6"/><rect x="9.34" y="14.15" width="6.22" height="0.9" fill="#9cdcfe"/><rect x="15.56" y="14.15" width="0.78" height="0.9" fill="#d4d4d4"/><rect x="3.11" y="17.27" width="4.67" height="0.9" fill="#569cd6"/><rect x="8.56" y="17.27" width="6.22" height="0.9" fill="#569cd6"/><rect x="15.56" y="17.27" width="8.56" height="0.9" fill="#dcdcaa"/><rect x="24.12" y="17.27" width="0.78" height="0.9" fill="#da70d6"/><rect x="24.90" y="17.27" width="2.33" height="0.9" fill="#9cdcfe"/><rect x="27.23" y="17.27" width="0.78" height="0.9" fill="#da70d6"/><rect x="28.79" y="17.27" width="0.78" height="0.9" fill="#da70d6"/><rect x="6.22" y="18.82" width="3.89" height="0.9" fill="#569cd6"/><rect x="10.11" y="18.82" width="1.56" height="0.9" fill="#d4d4d4"/><rect x="11.67" y="18.82" width="3.11" height="0.9" fill="#9cdcfe"/><rect x="15.56" y="18.82" width="0.78" height="0.9" fill="#d4d4d4"/><rect x="17.12" y="18.82" width="2.33" height="0.9" fill="#9cdcfe"/><rect x="19.45" y="18.82" width="0.78" height="0.9" fill="#d4d4d4"/><rect x="3.11" y="20.38" width="0.78" height="0.9" fill="#da70d6"/><rect x="0.00" y="21.93" width="4.67" height="0.9" fill="#569cd6"/><rect x="5.45" y="21.93" width="6.22" height="0.9" fill="#569cd6"/><rect x="12.45" y="21.93" width="4.67" height="0.9" fill="#dcdcaa"/><rect x="17.12" y="21.93" width="1.56" height="0.9" fill="#da70d6"/><rect x="19.45" y="21.93" width="0.78" height="0.9" fill="#da70d6"/><rect x="3.11" y="23.49" width="4.67" height="0.9" fill="#9cdcfe"/><rect x="8.56" y="23.49" width="0.78" height="0.9" fill="#d4d4d4"/><rect x="10.11" y="23.49" width="0.78" height="0.9" fill="#ce9178"/><rect x="10.89" y="23.49" width="4.67" height="0.9" fill="#569cd6"/><rect x="16.34" y="23.49" width="3.11" height="0.9" fill="#569cd6"/><rect x="20.23" y="23.49" width="0.78" height="0.9" fill="#ce9178"/><rect x="21.78" y="23.49" width="0.78" height="0.9" fill="#d4d4d4"/><rect x="23.34" y="23.49" width="3.89" height="0.9" fill="#569cd6"/><rect x="27.23" y="23.49" width="1.56" height="0.9" fill="#d4d4d4"/><rect x="28.79" y="23.49" width="7.78" height="0.9" fill="#9cdcfe"/><rect x="37.34" y="23.49" width="0.78" height="0.9" fill="#d4d4d4"/><rect x="38.90" y="23.49" width="0.78" height="0.9" fill="#ce9178"/><rect x="40.46" y="23.49" width="2.33" height="0.9" fill="#ce9178"/><rect x="43.57" y="23.49" width="2.33" height="0.9" fill="#ce9178"/><rect x="46.68" y="23.49" width="2.33" height="0.9" fill="#ce9178"/><rect x="49.79" y="23.49" width="3.11" height="0.9" fill="#ce9178"/><rect x="53.68" y="23.49" width="2.33" height="0.9" fill="#ce9178"/><rect x="56.79" y="23.49" width="5.45" height="0.9" fill="#ce9178"/><rect x="63.02" y="23.49" width="2.33" height="0.9" fill="#ce9178"/><rect x="65.35" y="23.49" width="0.78" height="0.9" fill="#d4d4d4"/><rect x="3.11" y="25.05" width="3.89" height="0.9" fill="#9cdcfe"/><rect x="7.78" y="25.05" width="0.78" height="0.9" fill="#d4d4d4"/><rect x="9.34" y="25.05" width="3.89" height="0.9" fill="#569cd6"/><rect x="13.23" y="25.05" width="1.56" height="0.9" fill="#d4d4d4"/><rect x="14.78" y="25.05" width="3.11" height="0.9" fill="#9cdcfe"/><rect x="17.89" y="25.05" width="1.56" height="0.9" fill="#d4d4d4"/><rect x="19.45" y="25.05" width="5.45" height="0.9" fill="#dcdcaa"/><rect x="24.90" y="25.05" width="0.78" height="0.9" fill="#179fff"/><rect x="25.67" y="25.05" width="4.67" height="0.9" fill="#9cdcfe"/><rect x="30.34" y="25.05" width="0.78" height="0.9" fill="#179fff"/><rect x="31.12" y="25.05" width="0.78" height="0.9" fill="#d4d4d4"/><rect x="3.11" y="26.60" width="3.89" height="0.9" fill="#9cdcfe"/><rect x="7.00" y="26.60" width="1.56" height="0.9" fill="#d4d4d4"/><rect x="8.56" y="26.60" width="7.78" height="0.9" fill="#dcdcaa"/><rect x="16.34" y="26.60" width="0.78" height="0.9" fill="#179fff"/><rect x="17.12" y="26.60" width="3.89" height="0.9" fill="#ce9178"/><rect x="21.01" y="26.60" width="0.78" height="0.9" fill="#d4d4d4"/><rect x="22.56" y="26.60" width="3.89" height="0.9" fill="#569cd6"/><rect x="26.45" y="26.60" width="1.56" height="0.9" fill="#d4d4d4"/><rect x="28.01" y="26.60" width="2.33" height="0.9" fill="#9cdcfe"/><rect x="30.34" y="26.60" width="0.78" height="0.9" fill="#d4d4d4"/><rect x="31.90" y="26.60" width="3.89" height="0.9" fill="#569cd6"/><rect x="35.79" y="26.60" width="1.56" height="0.9" fill="#d4d4d4"/><rect x="37.34" y="26.60" width="3.11" height="0.9" fill="#9cdcfe"/><rect x="40.46" y="26.60" width="0.78" height="0.9" fill="#d4d4d4"/><rect x="42.01" y="26.60" width="3.89" height="0.9" fill="#569cd6"/><rect x="45.90" y="26.60" width="1.56" height="0.9" fill="#d4d4d4"/><rect x="47.46" y="26.60" width="5.45" height="0.9" fill="#9cdcfe"/><rect x="52.90" y="26.60" width="0.78" height="0.9" fill="#179fff"/><rect x="53.68" y="26.60" width="0.78" height="0.9" fill="#d4d4d4"/><rect x="3.11" y="28.16" width="1.56" height="0.9" fill="#c586c0"/><rect x="5.45" y="28.16" width="0.78" height="0.9" fill="#179fff"/><rect x="6.22" y="28.16" width="3.89" height="0.9" fill="#9cdcfe"/><rect x="10.11" y="28.16" width="1.56" height="0.9" fill="#d4d4d4"/><rect x="11.67" y="28.16" width="5.45" height="0.9" fill="#dcdcaa"/><rect x="17.12" y="28.16" width="1.56" height="0.9" fill="#ffd700"/><rect x="18.67" y="28.16" width="0.78" height="0.9" fill="#179fff"/><rect x="20.23" y="28.16" width="0.78" height="0.9" fill="#179fff"/><rect x="6.22" y="29.71" width="7.00" height="0.9" fill="#9cdcfe"/><rect x="13.23" y="29.71" width="0.78" height="0.9" fill="#ffd700"/><rect x="14.00" y="29.71" width="11.67" height="0.9" fill="#ce9178"/><rect x="25.67" y="29.71" width="0.78" height="0.9" fill="#ffd700"/><rect x="27.23" y="29.71" width="0.78" height="0.9" fill="#d4d4d4"/><rect x="28.79" y="29.71" width="3.89" height="0.9" fill="#ce9178"/><rect x="33.45" y="29.71" width="6.22" height="0.9" fill="#ce9178"/><rect x="40.46" y="29.71" width="7.78" height="0.9" fill="#ce9178"/><rect x="48.24" y="29.71" width="0.78" height="0.9" fill="#d4d4d4"/><rect x="6.22" y="31.27" width="4.67" height="0.9" fill="#dcdcaa"/><rect x="10.89" y="31.27" width="0.78" height="0.9" fill="#ffd700"/><rect x="11.67" y="31.27" width="7.78" height="0.9" fill="#ce9178"/><rect x="20.23" y="31.27" width="0.78" height="0.9" fill="#ce9178"/><rect x="21.01" y="31.27" width="7.78" height="0.9" fill="#d4d4d4"/><rect x="28.79" y="31.27" width="13.23" height="0.9" fill="#ce9178"/><rect x="42.01" y="31.27" width="0.78" height="0.9" fill="#ffd700"/><rect x="42.79" y="31.27" width="0.78" height="0.9" fill="#d4d4d4"/><rect x="3.11" y="32.83" width="0.78" height="0.9" fill="#179fff"/><rect x="4.67" y="32.83" width="3.11" height="0.9" fill="#c586c0"/><rect x="8.56" y="32.83" width="0.78" height="0.9" fill="#179fff"/><rect x="6.22" y="34.38" width="7.00" height="0.9" fill="#9cdcfe"/><rect x="13.23" y="34.38" width="0.78" height="0.9" fill="#ffd700"/><rect x="14.00" y="34.38" width="11.67" height="0.9" fill="#ce9178"/><rect x="25.67" y="34.38" width="0.78" height="0.9" fill="#ffd700"/><rect x="27.23" y="34.38" width="0.78" height="0.9" fill="#d4d4d4"/><rect x="28.79" y="34.38" width="3.89" height="0.9" fill="#ce9178"/><rect x="33.45" y="34.38" width="3.89" height="0.9" fill="#ce9178"/><rect x="38.12" y="34.38" width="7.78" height="0.9" fill="#ce9178"/><rect x="45.90" y="34.38" width="0.78" height="0.9" fill="#d4d4d4"/><rect x="6.22" y="35.94" width="4.67" height="0.9" fill="#dcdcaa"/><rect x="10.89" y="35.94" width="0.78" height="0.9" fill="#ffd700"/><rect x="11.67" y="35.94" width="7.78" height="0.9" fill="#ce9178"/><rect x="20.23" y="35.94" width="0.78" height="0.9" fill="#ce9178"/><rect x="21.01" y="35.94" width="7.78" height="0.9" fill="#d4d4d4"/><rect x="28.79" y="35.94" width="13.23" height="0.9" fill="#ce9178"/><rect x="42.01" y="35.94" width="0.78" height="0.9" fill="#ffd700"/><rect x="42.79" y="35.94" width="0.78" height="0.9" fill="#d4d4d4"/><rect x="3.11" y="37.49" width="0.78" height="0.9" fill="#179fff"/><rect x="0.00" y="39.05" width="0.78" height="0.9" fill="#da70d6"/><rect x="0.00" y="40.61" width="4.67" height="0.9" fill="#569cd6"/><rect x="5.45" y="40.61" width="6.22" height="0.9" fill="#569cd6"/><rect x="12.45" y="40.61" width="3.11" height="0.9" fill="#dcdcaa"/><rect x="15.56" y="40.61" width="0.78" height="0.9" fill="#da70d6"/><rect x="16.34" y="40.61" width="2.33" height="0.9" fill="#9cdcfe"/><rect x="18.67" y="40.61" width="0.78" height="0.9" fill="#d4d4d4"/><rect x="19.45" y="40.61" width="1.56" height="0.9" fill="#ce9178"/><rect x="21.01" y="40.61" width="0.78" height="0.9" fill="#da70d6"/><rect x="22.56" y="40.61" width="0.78" height="0.9" fill="#da70d6"/><rect x="3.11" y="42.16" width="1.56" height="0.9" fill="#c586c0"/><rect x="5.45" y="42.16" width="0.78" height="0.9" fill="#179fff"/><rect x="6.22" y="42.16" width="2.33" height="0.9" fill="#9cdcfe"/><rect x="9.34" y="42.16" width="1.56" height="0.9" fill="#d4d4d4"/><rect x="11.67" y="42.16" width="1.56" height="0.9" fill="#ce9178"/><rect x="13.23" y="42.16" width="0.78" height="0.9" fill="#179fff"/><rect x="14.78" y="42.16" width="0.78" height="0.9" fill="#179fff"/><rect x="6.22" y="43.72" width="4.67" height="0.9" fill="#9cdcfe"/><rect x="11.67" y="43.72" width="0.78" height="0.9" fill="#d4d4d4"/><rect x="13.23" y="43.72" width="0.78" height="0.9" fill="#ce9178"/><rect x="14.00" y="43.72" width="4.67" height="0.9" fill="#569cd6"/><rect x="19.45" y="43.72" width="0.78" height="0.9" fill="#d4d4d4"/><rect x="21.01" y="43.72" width="3.11" height="0.9" fill="#569cd6"/><rect x="24.90" y="43.72" width="0.78" height="0.9" fill="#ce9178"/><rect x="26.45" y="43.72" width="0.78" height="0.9" fill="#d4d4d4"/><rect x="28.01" y="43.72" width="3.89" height="0.9" fill="#569cd6"/><rect x="31.90" y="43.72" width="1.56" height="0.9" fill="#d4d4d4"/><rect x="33.45" y="43.72" width="7.78" height="0.9" fill="#9cdcfe"/><rect x="41.23" y="43.72" width="0.78" height="0.9" fill="#d4d4d4"/><rect x="3.11" y="45.27" width="0.78" height="0.9" fill="#179fff"/><rect x="4.67" y="45.27" width="3.11" height="0.9" fill="#c586c0"/><rect x="8.56" y="45.27" width="0.78" height="0.9" fill="#179fff"/><rect x="6.22" y="46.83" width="4.67" height="0.9" fill="#9cdcfe"/><rect x="11.67" y="46.83" width="0.78" height="0.9" fill="#d4d4d4"/><rect x="13.23" y="46.83" width="0.78" height="0.9" fill="#ce9178"/><rect x="14.00" y="46.83" width="4.67" height="0.9" fill="#569cd6"/><rect x="19.45" y="46.83" width="0.78" height="0.9" fill="#d4d4d4"/><rect x="21.01" y="46.83" width="3.11" height="0.9" fill="#569cd6"/><rect x="24.90" y="46.83" width="0.78" height="0.9" fill="#ce9178"/><rect x="26.45" y="46.83" width="0.78" height="0.9" fill="#d4d4d4"/><rect x="28.01" y="46.83" width="3.89" height="0.9" fill="#569cd6"/><rect x="31.90" y="46.83" width="1.56" height="0.9" fill="#d4d4d4"/><rect x="33.45" y="46.83" width="7.78" height="0.9" fill="#9cdcfe"/><rect x="41.23" y="46.83" width="0.78" height="0.9" fill="#d4d4d4"/><rect x="42.79" y="46.83" width="4.67" height="0.9" fill="#ce9178"/><rect x="48.24" y="46.83" width="1.56" height="0.9" fill="#ce9178"/><rect x="50.57" y="46.83" width="0.78" height="0.9" fill="#ce9178"/><rect x="52.13" y="46.83" width="0.78" height="0.9" fill="#ce9178"/><rect x="52.90" y="46.83" width="0.78" height="0.9" fill="#d4d4d4"/><rect x="53.68" y="46.83" width="2.33" height="0.9" fill="#9cdcfe"/><rect x="56.02" y="46.83" width="0.78" height="0.9" fill="#d4d4d4"/><rect x="3.11" y="48.39" width="0.78" height="0.9" fill="#179fff"/><rect x="3.11" y="49.94" width="5.45" height="0.9" fill="#9cdcfe"/><rect x="9.34" y="49.94" width="0.78" height="0.9" fill="#d4d4d4"/><rect x="10.89" y="49.94" width="3.89" height="0.9" fill="#569cd6"/><rect x="14.78" y="49.94" width="1.56" height="0.9" fill="#d4d4d4"/><rect x="16.34" y="49.94" width="3.11" height="0.9" fill="#9cdcfe"/><rect x="19.45" y="49.94" width="1.56" height="0.9" fill="#d4d4d4"/><rect x="21.01" y="49.94" width="3.89" height="0.9" fill="#dcdcaa"/><rect x="24.90" y="49.94" width="0.78" height="0.9" fill="#179fff"/><rect x="25.67" y="49.94" width="4.67" height="0.9" fill="#9cdcfe"/><rect x="30.34" y="49.94" width="0.78" height="0.9" fill="#179fff"/><rect x="31.12" y="49.94" width="0.78" height="0.9" fill="#d4d4d4"/><rect x="3.11" y="51.50" width="4.67" height="0.9" fill="#c586c0"/><rect x="8.56" y="51.50" width="5.45" height="0.9" fill="#9cdcfe"/><rect x="14.00" y="51.50" width="0.78" height="0.9" fill="#d4d4d4"/><rect x="0.00" y="53.05" width="0.78" height="0.9" fill="#da70d6"/><rect x="0.00" y="54.61" width="4.67" height="0.9" fill="#569cd6"/><rect x="5.45" y="54.61" width="6.22" height="0.9" fill="#569cd6"/><rect x="12.45" y="54.61" width="4.67" height="0.9" fill="#dcdcaa"/><rect x="17.12" y="54.61" width="1.56" height="0.9" fill="#da70d6"/><rect x="19.45" y="54.61" width="0.78" height="0.9" fill="#da70d6"/><rect x="3.11" y="56.17" width="4.67" height="0.9" fill="#9cdcfe"/><rect x="8.56" y="56.17" width="0.78" height="0.9" fill="#d4d4d4"/><rect x="10.11" y="56.17" width="0.78" height="0.9" fill="#ce9178"/><rect x="10.89" y="56.17" width="4.67" height="0.9" fill="#569cd6"/><rect x="16.34" y="56.17" width="0.78" height="0.9" fill="#ce9178"/><rect x="17.89" y="56.17" width="0.78" height="0.9" fill="#d4d4d4"/><rect x="19.45" y="56.17" width="3.89" height="0.9" fill="#569cd6"/><rect x="23.34" y="56.17" width="1.56" height="0.9" fill="#d4d4d4"/><rect x="24.90" y="56.17" width="7.78" height="0.9" fill="#9cdcfe"/><rect x="32.68" y="56.17" width="0.78" height="0.9" fill="#d4d4d4"/><rect x="34.23" y="56.17" width="3.11" height="0.9" fill="#ce9178"/><rect x="38.12" y="56.17" width="2.33" height="0.9" fill="#ce9178"/><rect x="41.23" y="56.17" width="2.33" height="0.9" fill="#ce9178"/><rect x="44.35" y="56.17" width="3.11" height="0.9" fill="#ce9178"/><rect x="48.24" y="56.17" width="2.33" height="0.9" fill="#ce9178"/><rect x="51.35" y="56.17" width="5.45" height="0.9" fill="#ce9178"/><rect x="57.57" y="56.17" width="1.56" height="0.9" fill="#ce9178"/><rect x="59.91" y="56.17" width="3.89" height="0.9" fill="#ce9178"/><rect x="64.57" y="56.17" width="1.56" height="0.9" fill="#ce9178"/><rect x="66.91" y="56.17" width="2.33" height="0.9" fill="#ce9178"/><rect x="69.24" y="56.17" width="0.78" height="0.9" fill="#d4d4d4"/><rect x="3.11" y="57.72" width="3.89" height="0.9" fill="#9cdcfe"/><rect x="7.78" y="57.72" width="0.78" height="0.9" fill="#d4d4d4"/><rect x="9.34" y="57.72" width="3.89" height="0.9" fill="#569cd6"/><rect x="13.23" y="57.72" width="1.56" height="0.9" fill="#d4d4d4"/><rect x="14.78" y="57.72" width="3.11" height="0.9" fill="#9cdcfe"/><rect x="17.89" y="57.72" width="1.56" height="0.9" fill="#d4d4d4"/><rect x="19.45" y="57.72" width="5.45" height="0.9" fill="#dcdcaa"/><rect x="24.90" y="57.72" width="0.78" height="0.9" fill="#179fff"/><rect x="25.67" y="57.72" width="4.67" height="0.9" fill="#9cdcfe"/><rect x="30.34" y="57.72" width="0.78" height="0.9" fill="#179fff"/><rect x="31.12" y="57.72" width="0.78" height="0.9" fill="#d4d4d4"/><rect x="3.11" y="59.28" width="3.89" height="0.9" fill="#9cdcfe"/><rect x="7.00" y="59.28" width="1.56" height="0.9" fill="#d4d4d4"/><rect x="8.56" y="59.28" width="7.78" height="0.9" fill="#dcdcaa"/><rect x="16.34" y="59.28" width="0.78" height="0.9" fill="#179fff"/><rect x="17.12" y="59.28" width="3.89" height="0.9" fill="#ce9178"/><rect x="21.01" y="59.28" width="0.78" height="0.9" fill="#d4d4d4"/><rect x="22.56" y="59.28" width="3.89" height="0.9" fill="#569cd6"/><rect x="26.45" y="59.28" width="1.56" height="0.9" fill="#d4d4d4"/><rect x="28.01" y="59.28" width="2.33" height="0.9" fill="#9cdcfe"/><rect x="30.34" y="59.28" width="0.78" height="0.9" fill="#d4d4d4"/><rect x="31.90" y="59.28" width="3.89" height="0.9" fill="#569cd6"/><rect x="35.79" y="59.28" width="1.56" height="0.9" fill="#d4d4d4"/><rect x="37.34" y="59.28" width="3.11" height="0.9" fill="#9cdcfe"/><rect x="40.46" y="59.28" width="0.78" height="0.9" fill="#d4d4d4"/><rect x="42.01" y="59.28" width="3.89" height="0.9" fill="#569cd6"/><rect x="45.90" y="59.28" width="1.56" height="0.9" fill="#d4d4d4"/><rect x="47.46" y="59.28" width="5.45" height="0.9" fill="#9cdcfe"/><rect x="52.90" y="59.28" width="0.78" height="0.9" fill="#d4d4d4"/><rect x="54.46" y="59.28" width="4.67" height="0.9" fill="#d4d4d4"/><rect x="59.13" y="59.28" width="1.56" height="0.9" fill="#9cdcfe"/><rect x="60.68" y="59.28" width="0.78" height="0.9" fill="#179fff"/><rect x="61.46" y="59.28" width="0.78" height="0.9" fill="#d4d4d4"/><rect x="3.11" y="60.83" width="1.56" height="0.9" fill="#c586c0"/><rect x="5.45" y="60.83" width="0.78" height="0.9" fill="#179fff"/><rect x="6.22" y="60.83" width="3.89" height="0.9" fill="#9cdcfe"/><rect x="10.11" y="60.83" width="1.56" height="0.9" fill="#d4d4d4"/><rect x="11.67" y="60.83" width="5.45" height="0.9" fill="#dcdcaa"/><rect x="17.12" y="60.83" width="1.56" height="0.9" fill="#ffd700"/><rect x="18.67" y="60.83" width="0.78" height="0.9" fill="#179fff"/><rect x="20.23" y="60.83" width="0.78" height="0.9" fill="#179fff"/><rect x="6.22" y="62.39" width="7.00" height="0.9" fill="#9cdcfe"/><rect x="13.23" y="62.39" width="0.78" height="0.9" fill="#ffd700"/><rect x="14.00" y="62.39" width="11.67" height="0.9" fill="#ce9178"/><rect x="25.67" y="62.39" width="0.78" height="0.9" fill="#ffd700"/><rect x="27.23" y="62.39" width="0.78" height="0.9" fill="#d4d4d4"/><rect x="28.79" y="62.39" width="3.89" height="0.9" fill="#ce9178"/><rect x="33.45" y="62.39" width="6.22" height="0.9" fill="#ce9178"/><rect x="40.46" y="62.39" width="7.78" height="0.9" fill="#ce9178"/><rect x="48.24" y="62.39" width="0.78" height="0.9" fill="#d4d4d4"/><rect x="6.22" y="63.95" width="4.67" height="0.9" fill="#dcdcaa"/><rect x="10.89" y="63.95" width="0.78" height="0.9" fill="#ffd700"/><rect x="11.67" y="63.95" width="7.78" height="0.9" fill="#ce9178"/><rect x="20.23" y="63.95" width="0.78" height="0.9" fill="#ce9178"/><rect x="21.01" y="63.95" width="7.78" height="0.9" fill="#d4d4d4"/><rect x="28.79" y="63.95" width="13.23" height="0.9" fill="#ce9178"/><rect x="42.01" y="63.95" width="0.78" height="0.9" fill="#ffd700"/><rect x="42.79" y="63.95" width="0.78" height="0.9" fill="#d4d4d4"/><rect x="3.11" y="65.50" width="0.78" height="0.9" fill="#179fff"/><rect x="4.67" y="65.50" width="3.11" height="0.9" fill="#c586c0"/><rect x="8.56" y="65.50" width="0.78" height="0.9" fill="#179fff"/><rect x="6.22" y="67.06" width="7.00" height="0.9" fill="#9cdcfe"/><rect x="13.23" y="67.06" width="0.78" height="0.9" fill="#ffd700"/><rect x="14.00" y="67.06" width="10.89" height="0.9" fill="#ce9178"/><rect x="24.90" y="67.06" width="0.78" height="0.9" fill="#ffd700"/><rect x="26.45" y="67.06" width="0.78" height="0.9" fill="#d4d4d4"/><rect x="28.01" y="67.06" width="3.89" height="0.9" fill="#ce9178"/><rect x="32.68" y="67.06" width="3.89" height="0.9" fill="#ce9178"/><rect x="37.34" y="67.06" width="7.78" height="0.9" fill="#ce9178"/><rect x="45.12" y="67.06" width="0.78" height="0.9" fill="#d4d4d4"/><rect x="6.22" y="68.61" width="4.67" height="0.9" fill="#dcdcaa"/><rect x="10.89" y="68.61" width="0.78" height="0.9" fill="#ffd700"/><rect x="11.67" y="68.61" width="7.78" height="0.9" fill="#ce9178"/><rect x="20.23" y="68.61" width="0.78" height="0.9" fill="#ce9178"/><rect x="21.01" y="68.61" width="7.78" height="0.9" fill="#d4d4d4"/><rect x="28.79" y="68.61" width="13.23" height="0.9" fill="#ce9178"/><rect x="42.01" y="68.61" width="0.78" height="0.9" fill="#ffd700"/><rect x="42.79" y="68.61" width="0.78" height="0.9" fill="#d4d4d4"/><rect x="3.11" y="70.17" width="0.78" height="0.9" fill="#179fff"/><rect x="0.00" y="71.73" width="0.78" height="0.9" fill="#da70d6"/><rect x="0.00" y="73.28" width="4.67" height="0.9" fill="#569cd6"/><rect x="5.45" y="73.28" width="6.22" height="0.9" fill="#569cd6"/><rect x="12.45" y="73.28" width="4.67" height="0.9" fill="#dcdcaa"/><rect x="17.12" y="73.28" width="0.78" height="0.9" fill="#da70d6"/><rect x="17.89" y="73.28" width="2.33" height="0.9" fill="#9cdcfe"/><rect x="20.23" y="73.28" width="0.78" height="0.9" fill="#da70d6"/><rect x="21.78" y="73.28" width="0.78" height="0.9" fill="#da70d6"/><rect x="3.11" y="74.84" width="4.67" height="0.9" fill="#9cdcfe"/><rect x="8.56" y="74.84" width="0.78" height="0.9" fill="#d4d4d4"/><rect x="10.11" y="74.84" width="0.78" height="0.9" fill="#ce9178"/><rect x="10.89" y="74.84" width="4.67" height="0.9" fill="#569cd6"/><rect x="16.34" y="74.84" width="3.11" height="0.9" fill="#569cd6"/><rect x="20.23" y="74.84" width="0.78" height="0.9" fill="#ce9178"/><rect x="21.78" y="74.84" width="0.78" height="0.9" fill="#d4d4d4"/><rect x="23.34" y="74.84" width="3.89" height="0.9" fill="#569cd6"/><rect x="27.23" y="74.84" width="1.56" height="0.9" fill="#d4d4d4"/><rect x="28.79" y="74.84" width="7.78" height="0.9" fill="#9cdcfe"/><rect x="37.34" y="74.84" width="0.78" height="0.9" fill="#d4d4d4"/><rect x="38.90" y="74.84" width="0.78" height="0.9" fill="#ce9178"/><rect x="40.46" y="74.84" width="3.89" height="0.9" fill="#ce9178"/><rect x="45.12" y="74.84" width="1.56" height="0.9" fill="#ce9178"/><rect x="47.46" y="74.84" width="0.78" height="0.9" fill="#ce9178"/><rect x="49.01" y="74.84" width="1.56" height="0.9" fill="#ce9178"/><rect x="50.57" y="74.84" width="0.78" height="0.9" fill="#d4d4d4"/><rect x="3.11" y="76.39" width="3.89" height="0.9" fill="#9cdcfe"/><rect x="7.78" y="76.39" width="0.78" height="0.9" fill="#d4d4d4"/><rect x="9.34" y="76.39" width="3.89" height="0.9" fill="#569cd6"/><rect x="13.23" y="76.39" width="1.56" height="0.9" fill="#d4d4d4"/><rect x="14.78" y="76.39" width="3.11" height="0.9" fill="#9cdcfe"/><rect x="17.89" y="76.39" width="1.56" height="0.9" fill="#d4d4d4"/><rect x="19.45" y="76.39" width="5.45" height="0.9" fill="#dcdcaa"/><rect x="24.90" y="76.39" width="0.78" height="0.9" fill="#179fff"/><rect x="25.67" y="76.39" width="4.67" height="0.9" fill="#9cdcfe"/><rect x="30.34" y="76.39" width="0.78" height="0.9" fill="#179fff"/><rect x="31.12" y="76.39" width="0.78" height="0.9" fill="#d4d4d4"/><rect x="3.11" y="77.95" width="3.89" height="0.9" fill="#9cdcfe"/><rect x="7.00" y="77.95" width="1.56" height="0.9" fill="#d4d4d4"/><rect x="8.56" y="77.95" width="7.78" height="0.9" fill="#dcdcaa"/><rect x="16.34" y="77.95" width="0.78" height="0.9" fill="#179fff"/><rect x="17.12" y="77.95" width="2.33" height="0.9" fill="#ce9178"/><rect x="19.45" y="77.95" width="0.78" height="0.9" fill="#d4d4d4"/><rect x="21.01" y="77.95" width="2.33" height="0.9" fill="#9cdcfe"/><rect x="23.34" y="77.95" width="0.78" height="0.9" fill="#179fff"/><rect x="24.12" y="77.95" width="0.78" height="0.9" fill="#d4d4d4"/><rect x="3.11" y="79.51" width="1.56" height="0.9" fill="#c586c0"/><rect x="5.45" y="79.51" width="0.78" height="0.9" fill="#179fff"/><rect x="6.22" y="79.51" width="3.89" height="0.9" fill="#9cdcfe"/><rect x="10.11" y="79.51" width="1.56" height="0.9" fill="#d4d4d4"/><rect x="11.67" y="79.51" width="5.45" height="0.9" fill="#dcdcaa"/><rect x="17.12" y="79.51" width="1.56" height="0.9" fill="#ffd700"/><rect x="18.67" y="79.51" width="0.78" height="0.9" fill="#179fff"/><rect x="20.23" y="79.51" width="0.78" height="0.9" fill="#179fff"/><rect x="6.22" y="81.06" width="7.00" height="0.9" fill="#9cdcfe"/><rect x="13.23" y="81.06" width="0.78" height="0.9" fill="#ffd700"/><rect x="14.00" y="81.06" width="11.67" height="0.9" fill="#ce9178"/><rect x="25.67" y="81.06" width="0.78" height="0.9" fill="#ffd700"/><rect x="27.23" y="81.06" width="0.78" height="0.9" fill="#d4d4d4"/><rect x="28.79" y="81.06" width="3.89" height="0.9" fill="#ce9178"/><rect x="33.45" y="81.06" width="6.22" height="0.9" fill="#ce9178"/><rect x="40.46" y="81.06" width="7.00" height="0.9" fill="#ce9178"/><rect x="47.46" y="81.06" width="0.78" height="0.9" fill="#d4d4d4"/><rect x="6.22" y="82.62" width="4.67" height="0.9" fill="#dcdcaa"/><rect x="10.89" y="82.62" width="0.78" height="0.9" fill="#ffd700"/><rect x="11.67" y="82.62" width="7.78" height="0.9" fill="#ce9178"/><rect x="20.23" y="82.62" width="0.78" height="0.9" fill="#ce9178"/><rect x="21.01" y="82.62" width="7.78" height="0.9" fill="#d4d4d4"/><rect x="28.79" y="82.62" width="13.23" height="0.9" fill="#ce9178"/><rect x="42.01" y="82.62" width="0.78" height="0.9" fill="#ffd700"/><rect x="42.79" y="82.62" width="0.78" height="0.9" fill="#d4d4d4"/><rect x="3.11" y="84.17" width="0.78" height="0.9" fill="#179fff"/><rect x="4.67" y="84.17" width="3.11" height="0.9" fill="#c586c0"/><rect x="8.56" y="84.17" width="0.78" height="0.9" fill="#179fff"/><rect x="6.22" y="85.73" width="7.00" height="0.9" fill="#9cdcfe"/><rect x="13.23" y="85.73" width="0.78" height="0.9" fill="#ffd700"/><rect x="14.00" y="85.73" width="11.67" height="0.9" fill="#ce9178"/><rect x="25.67" y="85.73" width="0.78" height="0.9" fill="#ffd700"/><rect x="27.23" y="85.73" width="0.78" height="0.9" fill="#d4d4d4"/><rect x="28.79" y="85.73" width="3.89" height="0.9" fill="#ce9178"/><rect x="33.45" y="85.73" width="3.89" height="0.9" fill="#ce9178"/><rect x="38.12" y="85.73" width="7.00" height="0.9" fill="#ce9178"/><rect x="45.12" y="85.73" width="0.78" height="0.9" fill="#d4d4d4"/><rect x="6.22" y="87.29" width="4.67" height="0.9" fill="#dcdcaa"/><rect x="10.89" y="87.29" width="0.78" height="0.9" fill="#ffd700"/><rect x="11.67" y="87.29" width="7.78" height="0.9" fill="#ce9178"/><rect x="20.23" y="87.29" width="0.78" height="0.9" fill="#ce9178"/><rect x="21.01" y="87.29" width="7.78" height="0.9" fill="#d4d4d4"/><rect x="28.79" y="87.29" width="13.23" height="0.9" fill="#ce9178"/><rect x="42.01" y="87.29" width="0.78" height="0.9" fill="#ffd700"/><rect x="42.79" y="87.29" width="0.78" height="0.9" fill="#d4d4d4"/><rect x="3.11" y="88.84" width="0.78" height="0.9" fill="#179fff"/><rect x="0.00" y="90.40" width="0.78" height="0.9" fill="#da70d6"/></svg>
<div class="abs" style="left:1069px;top:50px;width:1px;height:609px;background:#141414"></div>
<div class="abs" style="left:1070px;top:51.7px;width:10px;height:256.7px;background:#434343"></div>
<div class="abs" style="left:1072.8px;top:366px;width:4.2px;height:7px;background:#8c8c8c"></div>
<div class="abs" style="left:1069px;top:384.5px;width:11px;height:1px;background:#8c8c8c"></div>
<div class="abs" style="left:1072.8px;top:385px;width:4.2px;height:6px;background:#8c8c8c"></div>
<div class="abs" style="left:0;top:659px;width:1080px;height:17px;background:#181818"></div>
<div class="abs" style="left:0;top:659px;width:1080px;height:1px;background:#2b2b2b"></div>
<svg class="abs" style="left:-4px;top:662.5px" width="10" height="10" viewBox="0 0 10 10"><circle cx="5" cy="5" r="4.2" fill="none" stroke="#cccccc" stroke-width="0.9"/><path d="M3.2 3.2 L6.8 6.8 M6.8 3.2 L3.2 6.8" stroke="#cccccc" stroke-width="0.9"/></svg>
<div class="t st" style="left:8.6px;top:659.3px;">0</div>
<svg class="abs" style="left:18px;top:662.5px" width="10" height="10" viewBox="0 0 10 10"><path d="M5 0.8 L9.4 9.2 H0.6 Z" fill="none" stroke="#cccccc" stroke-width="0.9" stroke-linejoin="round"/><path d="M5 3.6 V6.4 M5 7.4 V8.2" stroke="#cccccc" stroke-width="0.9"/></svg>
<div class="t st" style="left:30.4px;top:659.3px;">0</div>
<svg class="abs" style="left:49.8px;top:662.5px" width="10" height="10" viewBox="0 0 10 10"><g fill="none" stroke="#cccccc" stroke-width="0.85"><path d="M2.2 1 Q0.4 3.2 2.2 5.4 M7.8 1 Q9.6 3.2 7.8 5.4 M3.6 2 Q2.8 3.2 3.6 4.4 M6.4 2 Q7.2 3.2 6.4 4.4"/><circle cx="5" cy="3.2" r="0.7"/><path d="M5 4 L3 9.4 M5 4 L7 9.4 M3.6 7.6 H6.4"/></g></svg>
<div class="t st" style="left:62.6px;top:659.3px;">0</div>
<svg class="abs" style="left:82.3px;top:662.6px" width="7.5" height="10" viewBox="0 0 7.5 10"><path d="M4.6 0.3 L0.6 5.6 H3.4 L2.4 9.7 L6.9 3.9 H4.0 Z" fill="#f0b429"/></svg>
<div class="t st" style="left:93px;top:660.1px;font-size:9.25px">BLACKBOX Chat</div>
<div class="t st" style="left:178.3px;top:659.3px;">Add Logs</div>
<svg class="abs" style="left:231.5px;top:664px" width="10" height="7" viewBox="0 0 10 7"><path d="M0.5 2.5 Q1 1 3 1.2 L9.3 1.4 Q9.9 2 9.3 2.6 L5.5 2.7 L6 5.8 Q5.4 6.6 3.2 6.5 Q0.6 6.3 0.5 4.5 Z" fill="#f2b834"/></svg>
<div class="t st" style="left:243.5px;top:659.3px;">CyberCoder</div>
<div class="t st" style="left:308.7px;top:659.3px;">Improve Code</div>
<div class="t st" style="left:382.5px;top:659.3px;">Share Code Link</div>
<div class="t st" style="left:466.5px;top:659.3px;">Open Website</div>
<div class="t st" style="left:647.5px;top:659.3px;">Ln 58, Col 6</div>
<div class="t st" style="left:713.2px;top:659.3px;">Spaces: 4</div>
<div class="t st" style="left:769.2px;top:659.3px;">UTF-8</div>
<div class="t st" style="left:809.4px;top:659.3px;">LF</div>
<div class="t st" style="left:832.3px;top:659.3px;">PHP</div>
<svg class="abs" style="left:864.8px;top:662.5px" width="10" height="10" viewBox="0 0 10 10"><g fill="none" stroke="#cccccc" stroke-width="0.85"><path d="M2.4 6.8 A3.8 3.8 0 1 1 7.6 6.8"/><path d="M3.6 5.4 A2 2 0 1 1 6.4 5.4"/></g><circle cx="5" cy="4" r="0.9" fill="#cccccc"/><path d="M5 5 V9.6" stroke="#cccccc" stroke-width="1.2"/></svg>
<div class="t st" style="left:877.4px;top:659.3px;">Go Live</div>
<svg class="abs" style="left:923.2px;top:662.6px" width="7.5" height="10" viewBox="0 0 7.5 10"><path d="M4.6 0.3 L0.6 5.6 H3.4 L2.4 9.7 L6.9 3.9 H4.0 Z" fill="#f0b429"/></svg>
<div class="t st" style="left:934.7px;top:659.3px;font-size:9.45px;">BLACKBOXAI: Open Chat</div>
<svg class="abs" style="left:1058px;top:662.3px" width="10" height="10" viewBox="0 0 10 10"><path d="M1.2 7.6 H8.8 L7.8 6.2 V4 A2.8 2.8 0 0 0 2.2 4 V6.2 Z M4 8.8 H6" fill="none" stroke="#cccccc" stroke-width="0.9" stroke-linejoin="round"/></svg>
</div></body></html>
